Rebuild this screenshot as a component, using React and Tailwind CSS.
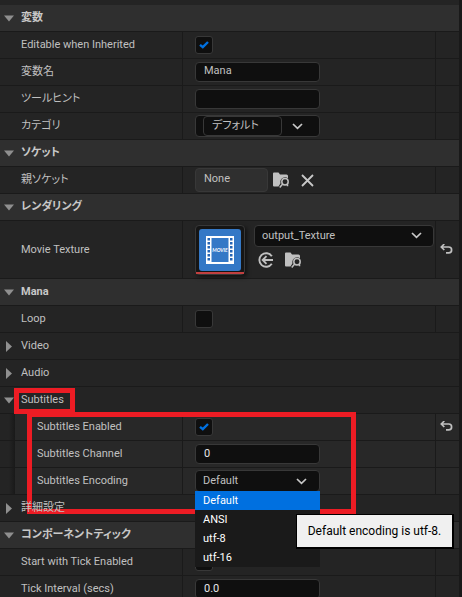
import React, { useId } from "react";

function Expander({ open, label }) {
  return (
    <button type="button" aria-label={label} aria-expanded={open} className="flex h-full w-[21px] shrink-0 items-center pl-1">
      {open ? (
        <svg width="10" height="7" viewBox="0 0 10 7">
          <path d="M0 .5h10L5 6.5z" fill="#8f8f8f" />
        </svg>
      ) : (
        <svg width="10" height="11" viewBox="0 0 10 11">
          <path d="M2 0v11L8 5.500z" fill="#8f8f8f" />
        </svg>
      )}
    </button>
  );
}

function Category({ title }) {
  return (
    <div className="flex h-[27px] items-center border-b border-[#1a1a1a] bg-[#2f2f2f]">
      <Expander open label={title} />
      <h2 className="font-bold text-[#c8c8c8]">{title}</h2>
    </div>
  );
}

function Group({ title, open = false, marked = false }) {
  return (
    <div className="flex h-[27px] items-center border-b border-[#1a1a1a]">
      <Expander open={open} label={title} />
      <h3 className="relative">
        {title}
        {marked && <span className="absolute -top-1 -left-[7px] h-[26px] w-[61px] border-[5px] border-[#ed1c24]" />}
      </h3>
    </div>
  );
}

function UndoIcon() {
  return (
    <svg width="13" height="12" viewBox="0 0 13 12" fill="none" stroke="#c0c0c0" strokeWidth="1.7">
      <path d="M4.300 0L1.300 3l3 3M1.500 3h7.200a2.900 2.900 0 0 1 0 5.800H6" />
    </svg>
  );
}

function Property({ label, id, nested = false, tall = false, changed = false, children }) {
  return (
    <div className={`grid grid-cols-[182px_1fr_24px] ${tall ? "h-[58px]" : "h-[27px]"}`}>
      <div className="flex">
        {nested && <div className="w-[15px] shrink-0 border-b border-[#1a1a1a] bg-gradient-to-r from-[#242424] from-60% to-[#191919]" />}
        <label
          htmlFor={id}
          className={`flex grow items-center border-b border-[#1a1a1a] ${nested ? "bg-[#282828] pl-[22px]" : "pl-[21px]"}`}
        >
          {label}
        </label>
      </div>
      <div className={`flex items-center border-b border-l border-[#1a1a1a] pl-3 ${nested ? "bg-[#282828]" : ""}`}>{children}</div>
      <div className={`flex items-center border-b border-l border-[#1a1a1a] pl-1 ${nested ? "bg-[#282828]" : ""}`}>
        {changed && (
          <button type="button" aria-label="Reset to default">
            <UndoIcon />
          </button>
        )}
      </div>
    </div>
  );
}

function CheckProperty({ label, checked = false, ...rest }) {
  const id = useId();
  return (
    <Property label={label} id={id} {...rest}>
      <span className="relative flex">
        <input
          id={id}
          type="checkbox"
          defaultChecked={checked}
          className="peer h-[18px] w-[18px] appearance-none rounded-[3px] border border-[#383838] bg-[#0f0f0f]"
        />
        <svg
          width="18"
          height="18"
          viewBox="0 0 18 18"
          className="pointer-events-none absolute inset-0 hidden peer-checked:block"
          fill="none"
          stroke="#0070e0"
          strokeWidth="2.400"
        >
          <path d="M5 8.800L7.800 11.200 13 6" />
        </svg>
      </span>
    </Property>
  );
}

function TextProperty({ label, value, bright = false, ...rest }) {
  const id = useId();
  return (
    <Property label={label} id={id} {...rest}>
      <input
        id={id}
        type="text"
        defaultValue={value}
        className={`h-5 w-[125px] rounded border border-[#383838] bg-[#0f0f0f] px-2 ${bright ? "pb-px text-[#e8e8e8]" : "pb-1 text-[#c0c0c0]"}`}
      />
    </Property>
  );
}

function Chevron() {
  return (
    <svg width="11" height="7" viewBox="0 0 11 7" fill="none" stroke="#c8c8c8" strokeWidth="1.700">
      <path d="M1 1l4.500 4.300L10 1" />
    </svg>
  );
}

function BrowseIcon() {
  return (
    <svg width="17" height="16" viewBox="0 0 17 16">
      <path d="M0 1.500Q0 .5 1 .5h4.500l1.500 2h6.500q1.500 0 1.500 1.500v2.200a4.800 4.800 0 0 0-7.500 5L5.500 14.500H1q-1 0-1-1z" fill="#c0c0c0" />
      <circle cx="12" cy="9.700" r="3.200" fill="none" stroke="#c0c0c0" strokeWidth="1.500" />
      <path d="M9.700 12l-3 3.500M14.500 12.500v1.700" stroke="#c0c0c0" strokeWidth="1.500" fill="none" />
    </svg>
  );
}

function UseSelectedIcon() {
  return (
    <svg width="16" height="16" viewBox="0 0 16 16" fill="none" stroke="#c0c0c0" strokeWidth="1.900">
      <path d="M13.800 4.200A6.800 6.800 0 1 0 13.800 11.800" />
      <path d="M15 8H5M8.500 4.200L4.700 8l3.800 3.800" />
    </svg>
  );
}

function MovieThumbnail() {
  const holes = [3, 7, 11, 15, 19, 23];
  return (
    <div className="flex h-[50px] w-[50px] shrink-0 flex-col items-center justify-between rounded border border-[#383838] bg-[#151515] pt-[3px] shadow-[2px_2px_4px_#0008]">
      <div className="flex h-[42px] w-[42px] items-center justify-center rounded-[3px] bg-[#3478c6]">
        <svg width="28" height="28" viewBox="0 0 28 28">
          <path d="M0 0h28v28H0z" fill="#fff" />
          <path d="M5.500 2h17v24h-17z" fill="#3478c6" />
          {holes.map((y) => (
            <path key={y} d={`M1.500 ${y - 1}h2.500v2.500h-2.500zM24 ${y - 1}h2.500v2.500h-2.500z`} fill="#2565b5" />
          ))}
          <text x="14" y="16" textAnchor="middle" fontSize="5" fontWeight="700" fontStyle="italic" fill="#fff" fontFamily="Lato, sans-serif">
            MOVIE
          </text>
        </svg>
      </div>
      <div className="h-[2px] w-full bg-[#c24040]" />
    </div>
  );
}

const encodings = ["Default", "ANSI", "utf-8", "utf-16"];

export default function App() {
  return (
    <main
      lang="ja"
      className="h-screen overflow-hidden border-r-[3px] border-[#191919] bg-[#242424] pt-[5px] font-['Roboto','Noto_Sans_CJK_JP',sans-serif] text-[11px] leading-4 text-[#c0c0c0] [font-feature-settings:'palt']"
    >
      <Category title="変数" />
      <CheckProperty label="Editable when Inherited" checked />
      <TextProperty label="変数名" value="Mana" />
      <TextProperty label="ツールヒント" value="" />
      <Property label="カテゴリ" id="category">
        <div className="flex h-[22px] w-[125px] items-center rounded border border-[#383838] bg-[#0f0f0f] pl-[7px]">
          <input
            id="category"
            type="text"
            defaultValue="デフォルト"
            className="h-5 w-[79px] rounded border border-[#383838] bg-[#0f0f0f] px-2 pb-1"
          />
          <button type="button" aria-label="カテゴリを選択" className="pl-[10px]">
            <Chevron />
          </button>
        </div>
      </Property>

      <Category title="ソケット" />
      <Property label="親ソケット" id="socket">
        <input id="socket" type="text" readOnly defaultValue="None" className="h-6 w-[73px] rounded border border-[#383838] bg-[#2f2f2f] px-2 pb-1" />
        <button type="button" aria-label="Browse" className="ml-[5px]">
          <BrowseIcon />
        </button>
        <button type="button" aria-label="Clear" className="ml-[11px]">
          <svg width="13" height="13" viewBox="0 0 13 13" stroke="#c8c8c8" strokeWidth="1.800">
            <path d="M1 1l11 11M12 1L1 12" />
          </svg>
        </button>
      </Property>

      <Category title="レンダリング" />
      <Property label="Movie Texture" id="texture" tall changed>
        <MovieThumbnail />
        <div className="ml-[9px] flex h-[50px] grow flex-col gap-[5px] pr-[1px]">
          <div className="relative flex h-[22px] items-center">
            <select id="texture" className="h-full w-full appearance-none rounded border border-[#383838] bg-[#0f0f0f] px-[7px]">
              <option>output_Texture</option>
            </select>
            <span className="pointer-events-none absolute right-3">
              <Chevron />
            </span>
          </div>
          <div className="flex gap-[11px] pl-1">
            <button type="button" aria-label="Use selected asset">
              <UseSelectedIcon />
            </button>
            <button type="button" aria-label="Browse to asset">
              <BrowseIcon />
            </button>
          </div>
        </div>
      </Property>

      <Category title="Mana" />
      <CheckProperty label="Loop" />
      <Group title="Video" />
      <Group title="Audio" />
      <section className="relative">
        <Group title="Subtitles" open marked />
        <CheckProperty label="Subtitles Enabled" checked nested changed />
        <TextProperty label="Subtitles Channel" value="0" bright nested />
        <Property label="Subtitles Encoding" id="encoding" nested>
          <div className="relative z-10">
            <button
              id="encoding"
              type="button"
              aria-haspopup="listbox"
              aria-expanded="true"
              className="flex h-[22px] w-[125px] items-center justify-between rounded border border-[#383838] bg-[#0f0f0f] pr-3 pl-[7px]"
            >
              Default
              <Chevron />
            </button>
            <ul role="listbox" className="absolute top-[21px] left-0 w-[125px] bg-[#1a1a1a] text-white">
              {encodings.map((name, i) => (
                <li key={name} role="option" aria-selected={i === 0} className="flex h-[19px] items-center pl-2 aria-selected:bg-[#0070e0]">
                  {name}
                </li>
              ))}
            </ul>
            <div
              role="tooltip"
              className="absolute top-11 left-[101px] flex h-[35px] w-[158px] items-center justify-center border-t border-r-2 border-b-2 border-l border-black bg-[#f0f0f0] text-[12px] whitespace-nowrap text-black"
            >
              Default encoding is utf-8.
            </div>
          </div>
        </Property>
        <div className="pointer-events-none absolute top-[25px] left-[27px] h-[102px] w-[329px] border-[5px] border-[#ed1c24]" />
      </section>
      <Group title="詳細設定" />

      <Category title="コンポーネントティック" />
      <CheckProperty label="Start with Tick Enabled" />
      <TextProperty label="Tick Interval (secs)" value="0.0" bright />
    </main>
  );
}
